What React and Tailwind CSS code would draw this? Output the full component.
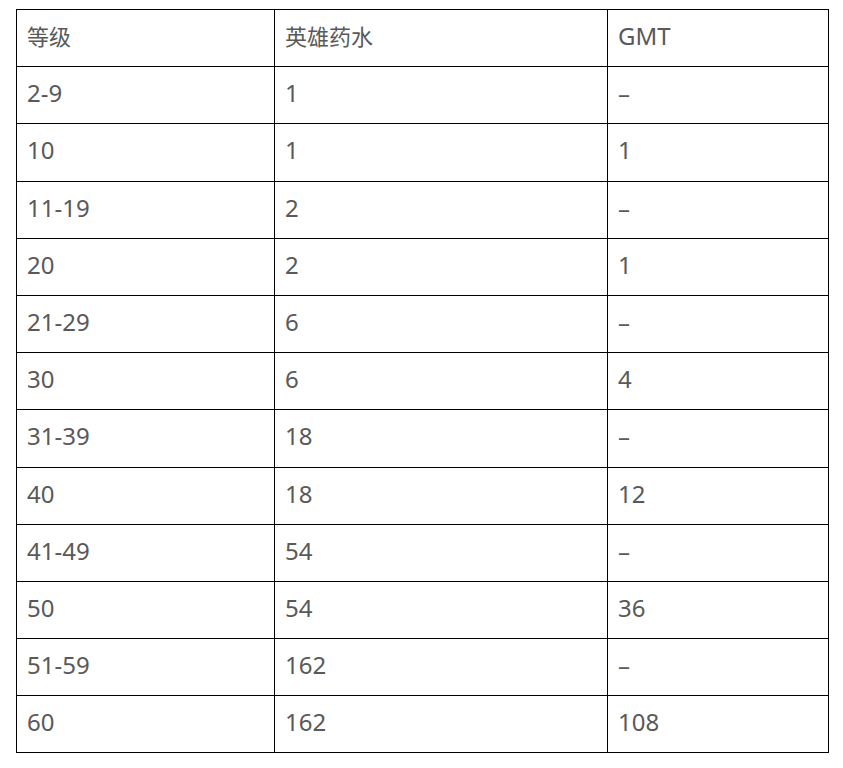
const rows = [
  ["2-9", "1", "–"],
  ["10", "1", "1"],
  ["11-19", "2", "–"],
  ["20", "2", "1"],
  ["21-29", "6", "–"],
  ["30", "6", "4"],
  ["31-39", "18", "–"],
  ["40", "18", "12"],
  ["41-49", "54", "–"],
  ["50", "54", "36"],
  ["51-59", "162", "–"],
  ["60", "162", "108"],
];

const cell = "border border-black px-[10px] pb-[4px] h-[57.2px] align-middle text-left font-normal";

export default function App() {
  return (
    <div className="bg-white min-h-[768px] pt-[9px] pl-[16px] text-[24px] text-[#595959] font-['Noto_Sans','Noto_Sans_CJK_SC',sans-serif]">
      <table className="border-collapse w-[812px] table-fixed">
        <colgroup>
          <col className="w-[258px]" />
          <col className="w-[333px]" />
          <col className="w-[221px]" />
        </colgroup>
        <thead>
          <tr>
            <th className={cell + " text-[22px]"}>等级</th>
            <th className={cell + " text-[22px]"}>英雄药水</th>
            <th className={cell}>GMT</th>
          </tr>
        </thead>
        <tbody>
          {rows.map((r, i) => (
            <tr key={i}>
              {r.map((v, j) => (
                <td key={j} className={cell}>
                  {v}
                </td>
              ))}
            </tr>
          ))}
        </tbody>
      </table>
    </div>
  );
}
